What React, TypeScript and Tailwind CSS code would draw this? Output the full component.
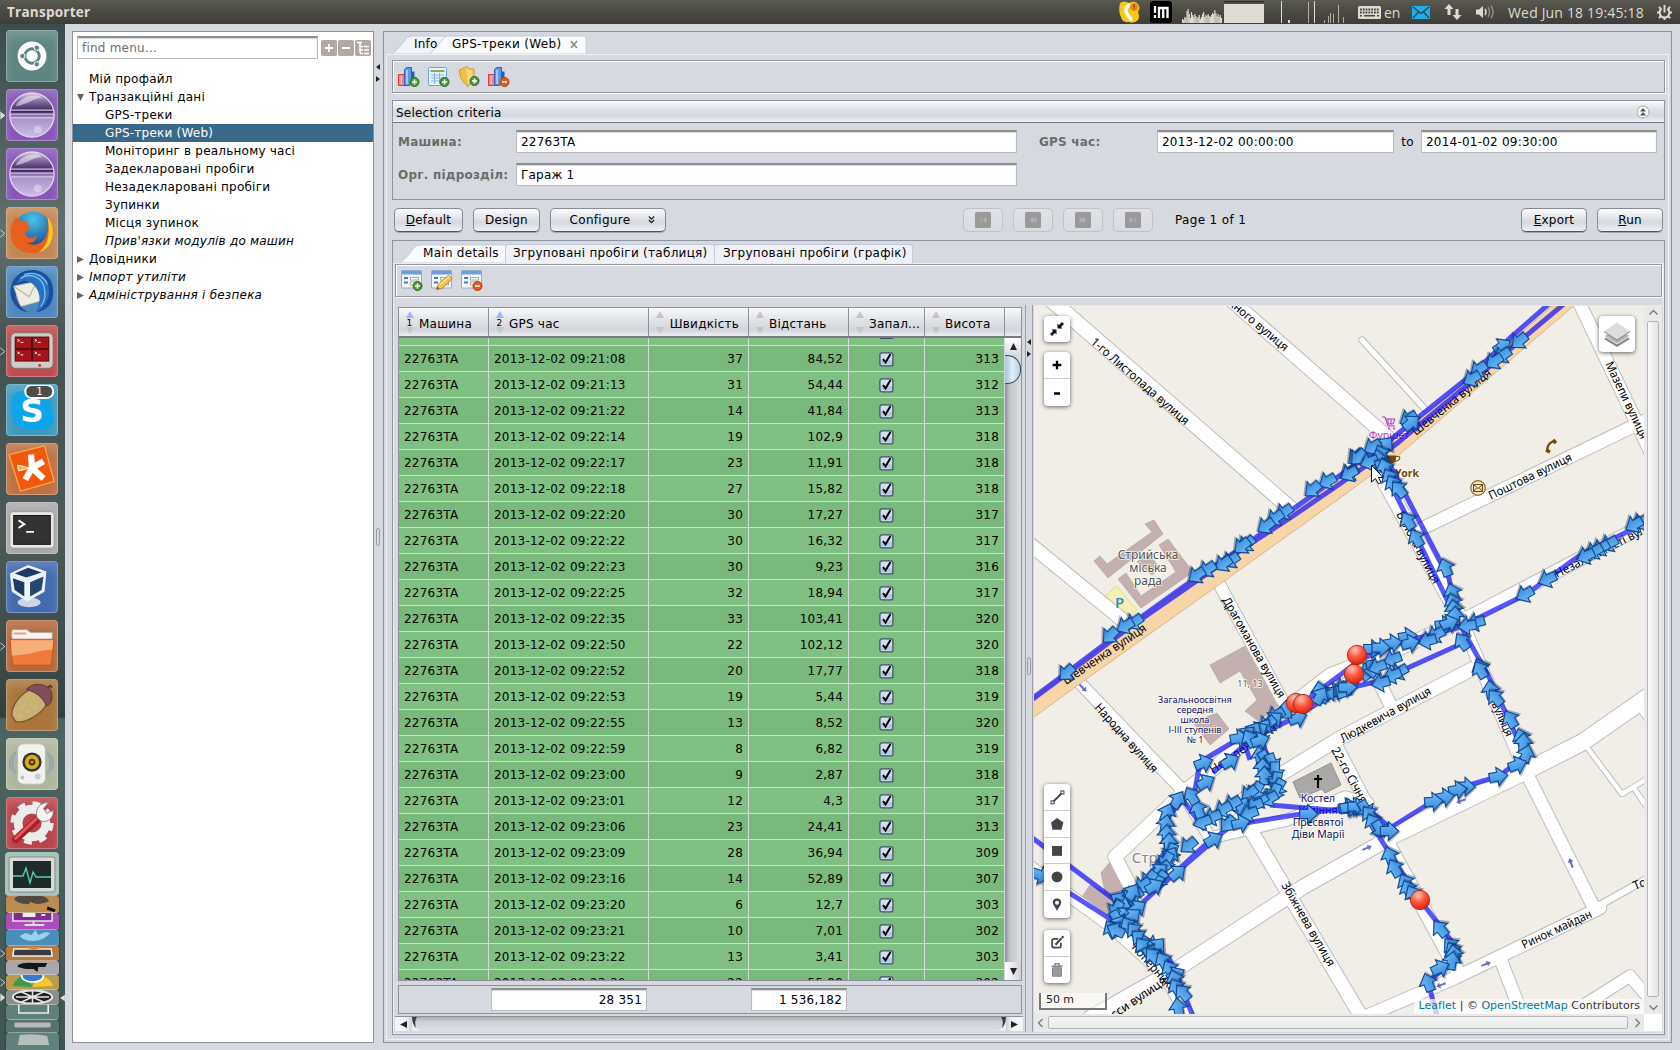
import React from "react";

/* ---------- launcher ---------- */

const tileTop =
  "relative h-[52px] w-[52px] shrink-0 overflow-hidden rounded-[4px] border border-white/30 shadow-[inset_0_6px_10px_rgba(255,255,255,0.18)]";

function Eclipse() {
  return (
    <svg viewBox="0 0 52 52" className="h-full w-full">
      <defs>
        <linearGradient id="ecl" x1="0" y1="0" x2="0" y2="1">
          <stop offset="0" stopColor="#d9cfe4" />
          <stop offset="0.18" stopColor="#8a6fa8" />
          <stop offset="0.42" stopColor="#3a2358" />
          <stop offset="0.55" stopColor="#a98fca" />
          <stop offset="1" stopColor="#cdbbe6" />
        </linearGradient>
      </defs>
      <circle cx="26" cy="26" r="23" fill="url(#ecl)" stroke="#e6dcf2" strokeWidth="1.3" />
      <path d="M4 21H48M3 25H49M4 29H48" stroke="#d5c6e8" strokeWidth="1.3" />
      <path d="M9 17C14 6 32 3 36 8C28 8 24 14 9 17Z" fill="#fff" opacity=".5" />
      <circle cx="32" cy="41" r="4" fill="#fff" opacity=".35" />
    </svg>
  );
}

const launcher: { bg: string; icon: React.ReactNode; mark?: string }[] = [
  {
    bg: "bg-[#5e8581]",
    icon: (
      <svg viewBox="0 0 52 52" className="h-full w-full">
        <circle cx="26" cy="26" r="15" fill="#fff" />
        <circle cx="26" cy="26" r="7.5" fill="none" stroke="#5e8581" strokeWidth="3" />
        <g fill="#5e8581" stroke="#fff" strokeWidth="1">
          <circle cx="16" cy="26" r="2.8" />
          <circle cx="31" cy="17.4" r="2.8" />
          <circle cx="31" cy="34.6" r="2.8" />
        </g>
      </svg>
    ),
  },
  { bg: "bg-[#8656b8]", icon: <Eclipse />, mark: "solid" },
  { bg: "bg-[#8656b8]", icon: <Eclipse /> },
  {
    bg: "bg-[#c28656]",
    mark: "open",
    icon: (
      <svg viewBox="0 0 52 52" className="h-full w-full">
        <defs>
          <radialGradient id="ffb" cx=".5" cy=".2" r=".8">
            <stop offset="0" stopColor="#4fc4ea" />
            <stop offset="1" stopColor="#123c86" />
          </radialGradient>
        </defs>
        <circle cx="27" cy="24" r="20" fill="url(#ffb)" />
        <path d="M42 9C52 20 49 42 33 46C16 50 2 40 4 22C5 16 8 14 8 10C12 11 14 13 15 14L22 14C20 17 21 18 24 20C22 24 19 22 19 27C21 32 27 32 31 29C30 36 24 37 20 36C28 41 38 37 41 28C43 22 44 16 42 9Z" fill="#e8601c" />
        <path d="M42 9C52 20 49 42 33 46C44 38 45 24 42 9Z" fill="#fbc926" />
      </svg>
    ),
  },
  {
    bg: "bg-[#4f86bd]",
    icon: (
      <svg viewBox="0 0 52 52" className="h-full w-full">
        <path d="M6 36C0 22 6 8 20 4C36 0 49 11 48 27C48 39 40 46 30 47C38 40 38 30 32 21C24 14 14 18 6 36Z" fill="#174f9c" />
        <path d="M7 20L31 15L36 35L14 41Z" fill="#efece2" stroke="#c8c4b6" />
        <path d="M7 20L23 31L31 15" fill="none" stroke="#b9b5a6" strokeWidth="1.2" />
        <path d="M10 18C13 5 31 1 40 12C48 24 43 41 30 47C36 36 35 25 27 18C21 13 15 13 10 18Z" fill="#2671c2" />
        <path d="M5 26C4 38 12 46 22 47C15 43 11 38 8 28Z" fill="#1b4f98" />
        <path d="M14 12C22 6 34 9 38 19C41 28 39 36 35 41M18 8C28 4 38 9 42 18" fill="none" stroke="#83bdf0" strokeWidth="1.4" />
      </svg>
    ),
  },
  {
    bg: "bg-[#bf4a50]",
    mark: "open",
    icon: (
      <svg viewBox="0 0 52 52" className="h-full w-full">
        <rect x="4" y="7" width="44" height="37" rx="5" fill="#cfcdc8" stroke="#77736c" />
        <rect x="8" y="11" width="36" height="26" fill="#4c0e10" />
        <g fill="#a8141b">
          <rect x="9" y="12" width="16" height="11" />
          <rect x="27" y="12" width="16" height="11" />
          <rect x="9" y="25" width="16" height="11" />
          <rect x="27" y="25" width="16" height="11" />
        </g>
        <path d="M11 14l2 1l-2 1M29 14l2 1l-2 1M11 27l2 1l-2 1M29 27l2 1l-2 1M14 17h3M32 17h3M14 30h3M32 30h3" stroke="#fff" fill="none" />
        <circle cx="34" cy="41" r="1.5" fill="#e22" />
      </svg>
    ),
  },
  {
    bg: "bg-[#3f9abf]",
    icon: (
      <svg viewBox="0 0 52 52" className="h-full w-full">
        <path d="M5 18C4 10 12 4 20 7C32 2 46 10 46 24C51 34 48 46 38 46C30 48 24 46 18 45C8 44 3 34 5 18Z" fill="#0ea5e8" />
        <text x="26" y="38" textAnchor="middle" fontSize="34" fontWeight="700" fill="#fff" className="tracking-normal font-['DejaVu_Sans']">S</text>
        <rect x="19" y="0" width="29" height="13.5" rx="6.5" fill="#4d4d4d" stroke="#fff" strokeWidth="2" />
        <text x="34" y="10.5" textAnchor="middle" fontSize="10" fill="#fff" className="font-['DejaVu_Sans']">1</text>
      </svg>
    ),
  },
  {
    bg: "bg-[#bd7143]",
    icon: (
      <svg viewBox="0 0 52 52" className="h-full w-full">
        <path d="M2 11L39 2L49 39L14 49Z" fill="#f3570c" stroke="#f7a44d" strokeWidth="1.5" />
        <path d="M26 25L25 11M26 25L38 18M26 25L38 36M26 25L19 37" stroke="#fff" strokeWidth="6.5" />
        <path d="M11 22L24 25L12 28Z" fill="#fbb23d" stroke="#fff" />
      </svg>
    ),
  },
  {
    bg: "bg-[#a8a8a8]",
    icon: (
      <svg viewBox="0 0 52 52" className="h-full w-full">
        <rect x="3" y="9" width="46" height="38" rx="3" fill="#e8e8e6" stroke="#999" />
        <rect x="7" y="13" width="38" height="30" fill="#333" stroke="#111" />
        <path d="M12 18l6 4l-6 4" stroke="#fff" strokeWidth="2" fill="none" />
        <path d="M20 30h8" stroke="#fff" strokeWidth="2" />
      </svg>
    ),
  },
  {
    bg: "bg-[#426ab0]",
    icon: (
      <svg viewBox="0 0 52 52" className="h-full w-full">
        <ellipse cx="23" cy="42" rx="12" ry="5" fill="#ccd6e4" />
        <path d="M3 12L22 3L41 10L39 31L21 41L5 31Z" fill="#eef3f9" />
        <path d="M8 12L22 6L36 11L20 16Z" fill="#1c3a62" />
        <path d="M6 17L18 21L18 36L8 29Z" fill="#1c3a62" />
        <path d="M24 21L38 15L36 29L24 36Z" fill="#24476f" />
      </svg>
    ),
  },
  {
    bg: "bg-[#b4683f]",
    mark: "open",
    icon: (
      <svg viewBox="0 0 52 52" className="h-full w-full">
        <path d="M5 11Q5 9 7 9H21Q23 12 26 12H47V30H5Z" fill="#f6f3ef" stroke="#aaa" />
        <path d="M7 13H20" stroke="#f0a171" strokeWidth="2" />
        <path d="M3 19H49L46 46H6Z" fill="#ee7b3c" stroke="#c95418" />
        <path d="M4 20H48L47 30C32 30 24 36 5 36Z" fill="#f7ae78" />
      </svg>
    ),
  },
  {
    bg: "bg-[#a9753a]",
    icon: (
      <svg viewBox="0 0 52 52" className="h-full w-full">
        <path d="M5 37C5 22 20 10 28 9L42 24C36 36 18 46 9 43Z" fill="#c9b078" stroke="#7a5a35" strokeWidth="1.4" />
        <path d="M12 32l3-5M20 34l5-3M19 21l4-4M27 29l4-2M12 38l4-2M16 26l2 3M26 20l3 3M24 26l2-2" stroke="#d2ba68" strokeWidth="2" />
        <path d="M20 10C26 2 42 3 46 12C48 20 46 25 41 27C38 19 30 12 20 10Z" fill="#80505a" stroke="#553238" />
        <path d="M42 8L45 6L47 8" stroke="#553238" fill="none" strokeWidth="2" />
      </svg>
    ),
  },
  {
    bg: "bg-[#aeb79d]",
    icon: (
      <svg viewBox="0 0 52 52" className="h-full w-full">
        <path d="M9 14Q2 25 9 36M5 17Q1 25 5 33M42 14Q49 25 42 36M46 17Q50 25 46 33" stroke="#8fa2b0" fill="none" strokeWidth="1.6" />
        <rect x="11" y="5" width="29" height="42" rx="6" fill="#f1f1ef" stroke="#b9b9b5" />
        <circle cx="26" cy="24" r="10" fill="#333" />
        <circle cx="26" cy="24" r="7.500" fill="#d8ab1c" />
        <circle cx="26" cy="24" r="3.5" fill="#4a3a0c" />
        <circle cx="26" cy="24" r="1.500" fill="#d8ab1c" />
        <circle cx="16" cy="40" r="2" fill="#bbb" />
        <circle cx="32" cy="39" r="3" fill="#ccc" />
      </svg>
    ),
  },
  {
    bg: "bg-[#b8444b]",
    icon: (
      <svg viewBox="0 0 52 52" className="h-full w-full">
        <circle cx="26" cy="26" r="14.500" fill="none" stroke="#ececea" strokeWidth="9" />
        <circle cx="26" cy="26" r="20" fill="none" stroke="#ececea" strokeWidth="5" strokeDasharray="8 7.7" />
        <path d="M9 43L34 20" stroke="#a91e26" strokeWidth="7.5" strokeLinecap="round" />
        <path d="M9 42L30 22" stroke="#e7545a" strokeWidth="3" strokeLinecap="round" />
        <path d="M31 20C29 11 35 4 43 5L38 11L41 16L48 13C49 21 42 26 35 24Z" fill="#f6f6f4" stroke="#888" />
      </svg>
    ),
  },
];

const stack: { bg: string; h: string; art: React.ReactNode; mark?: string }[] = [
  { bg: "bg-[#b98c52]", h: "h-[17px]", art: <g><path d="M8 3Q14 -3 26 0Q40 -2 44 5Q36 9 22 8Q12 8 8 3Z" fill="#4f4a42" /><path d="M24 7L48 14" stroke="#d6892f" strokeWidth="2" /><path d="M42 12L50 15" stroke="#111" strokeWidth="3" /></g> },
  { bg: "bg-[#ad4cbb]", h: "h-[17px]", art: <g><path d="M7 0V8H47V0" fill="#7e2e8c" stroke="#e9e0ec" strokeWidth="1.600" /><path d="M19 12H39M28 8V12" stroke="#ddd" strokeWidth="2" /><path d="M17 0V4H30V0M36 1V3H40V1" fill="#eee" /></g> },
  { bg: "bg-[#4a8fba]", h: "h-[16px]", art: <path d="M14 6C18 12 36 14 45 3L40 2L33 5L30 0L26 5L20 3Z" fill="#9bd0ee" /> },
  { bg: "bg-[#b57a42]", h: "h-[15px]", mark: "open", art: <g><path d="M8 3H46L47 10H7Z" fill="#3a3a3a" stroke="#eee" strokeWidth="1.600" /><path d="M20 1Q28 7 36 1Z" fill="#d88b3a" /></g> },
  { bg: "bg-[#a9a6ac]", h: "h-[14px]", art: <path d="M12 4Q18 1 28 2L42 2L40 6L33 6L32 11L28 8L20 8L12 6Z" fill="#161616" /> },
  { bg: "bg-[#b99a52]", h: "h-[15px]", mark: "open", art: <g><path d="M7 11A21 14 0 0 1 20 0L27 12Z" fill="#3c9a4b" /><path d="M34 0A21 14 0 0 1 48 11L27 12Z" fill="#f2c928" /><ellipse cx="27" cy="1" rx="11" ry="6" fill="#3c78c8" stroke="#fff" strokeWidth="1.600" /></g> },
  { bg: "bg-[#8a8f8a]", h: "h-[15px]", mark: "solid", art: <g><ellipse cx="27" cy="7" rx="20" ry="6.500" fill="#222" stroke="#e6e6e6" strokeWidth="2" /><path d="M10 7H44M27 1V13M16 2L38 12M38 2L16 12" stroke="#e6e6e6" strokeWidth="1.600" /></g> },
  { bg: "bg-[#5f807c]", h: "h-[15px]", art: <path d="M13 0V8H43V0" fill="none" stroke="#e8f0ee" strokeWidth="1.600" /> },
  { bg: "bg-[#55726f]", h: "h-[13px]", art: <rect x="8" y="2" width="38" height="6" rx="2" fill="#b5bbb9" stroke="#666" /> },
  { bg: "bg-[#5f807c]", h: "h-[18px]", art: <path d="M14 2Q28 0 42 3L44 12H12Z" fill="#b5c0bc" /> },
];

function RunMark({ kind }: { kind?: string }) {
  return (
    <svg viewBox="0 0 6 10" className="h-[9px] w-[6px] shrink-0">
      {kind && <path d="M0 1L5 5L0 9" fill={kind === "solid" ? "#dcdcdc" : "none"} stroke="#dcdcdc" />}
    </svg>
  );
}

function Launcher() {
  return (
    <aside className="flex h-full w-[65px] shrink-0 flex-col overflow-hidden bg-[linear-gradient(#3c4c4c,#5f706e_20%,#445251_32%,#4b5a58_50%,#3b4947_63%,#31403e_67.5%,#4d6562_67.8%,#3f5552)] pt-[6px]">
      <div className="flex flex-col gap-[7px]">
        {launcher.map((t, i) => (
          <div key={i} className="flex items-center">
            <RunMark kind={t.mark} />
            <div className={`${tileTop} ${t.bg}`}>{t.icon}</div>
          </div>
        ))}
      </div>
      <div className="mt-[3px] flex items-center pl-[5px]">
        <div className="h-[44px] w-[54px] rounded-[4px] bg-[#a9c4bb]">
          <svg viewBox="0 0 54 44" className="h-full w-full">
            <rect x="4" y="5" width="46" height="35" rx="2" fill="#d5dbd8" stroke="#888" />
            <rect x="8" y="9" width="38" height="27" fill="#1f2b2b" />
            <path d="M8 24H18L21 16L25 31L28 20L31 25H46" stroke="#4fd1ac" strokeWidth="1.4" fill="none" />
          </svg>
        </div>
      </div>
      <div className="flex flex-col">
        {stack.map((s, i) => (
          <div key={i} className={`flex items-center ${s.h}`}>
            <RunMark kind={s.mark} />
            <div className={`h-full w-[53px] overflow-hidden rounded-[3px] border-b border-white/40 shadow-[0_1px_2px_rgba(0,0,0,0.6)] ${s.bg}`}>
              <svg viewBox="0 0 54 18" className="h-[18px] w-full" preserveAspectRatio="none">{s.art}</svg>
            </div>
            {s.mark === "solid" && (
              <svg viewBox="0 0 6 10" className="ml-px h-[8px] w-[5px]"><path d="M6 1L0 5L6 9Z" fill="#ddd" /></svg>
            )}
          </div>
        ))}
      </div>
    </aside>
  );
}

/* ---------- top panel ---------- */

const cpu = [4, 3, 6, 5, 12, 14, 9, 5, 11, 8, 6, 9, 7, 5, 6, 8, 4, 6, 9, 11, 6, 8, 7, 9, 7, 6, 8, 10, 9, 13, 10, 7, 9, 6, 8, 5];

function TopBar() {
  return (
    <header className="flex h-6 shrink-0 items-center bg-[linear-gradient(#5b5a50,#4d4c45_40%,#3e3d39)] pl-[7px] pr-[7px] text-[#dfdbd2] font-['Open_Sans',sans-serif]">
      <span className="text-[13.500px] font-bold tracking-[0.250px]">Transporter</span>
      <svg viewBox="0 0 22 24" className="ml-auto h-6 w-[22px]">
        <path d="M2 3Q6 0 11 3Q17 0 20 4Q23 8 20 12Q22 17 20 20Q16 24 11 22Q4 23 3 17Q0 12 2 3Z" fill="#f6c915" />
        <path d="M11 5Q4 10 13 19" stroke="#fff" strokeWidth="3.5" fill="none" strokeLinecap="round" />
        <circle cx="16" cy="7" r="4" fill="#f08a1a" />
        <path d="M16 4.500V7.500M16 8.500V9.500" stroke="#7b3c00" strokeWidth="1.400" />
      </svg>
      <div className="ml-[10px] flex h-[22px] w-[22px] items-center justify-center rounded-[3px] bg-black">
        <svg viewBox="0 0 22 22" className="h-[22px] w-[22px]">
          <path d="M5 5V12M5 14V17M9 17V7H17.500V17M13.200 7V17" stroke="#fff" strokeWidth="2.300" fill="none" />
        </svg>
      </div>
      <svg viewBox="0 0 165 24" className="ml-[10px] h-6 w-[165px]">
        {cpu.map((h, i) => (
          <rect key={i} x={i * 1.11} y={23 - h} width="1.2" height={h} fill="#dfdbd2" />
        ))}
        <rect x="42" y="1" width="40" height="1.500" fill="#2f2e2a" />
        <rect x="42" y="4" width="40" height="19" fill="#dfdbd2" />
        <g fill="#dfdbd2">
          <rect x="99" y="1" width="1" height="22" />
          <rect x="106" y="20" width="2" height="3" />
          <rect x="126" y="2" width="1" height="21" opacity=".7" />
          <rect x="132" y="1" width="1" height="22" />
          <g opacity=".7">
            <rect x="142" y="20" width="1" height="3" />
            <rect x="146" y="16" width="1" height="7" />
            <rect x="148" y="13" width="1" height="10" />
            <rect x="151" y="14" width="1" height="9" />
            <rect x="156" y="5" width="1" height="18" />
            <rect x="161" y="17" width="1" height="6" />
          </g>
        </g>
      </svg>
      <svg viewBox="0 0 23 13" className="ml-[11px] h-[13px] w-[23px]">
        <rect width="23" height="13" rx="1.500" fill="#dfdbd2" />
        <path d="M2 3.500H21M2 6.500H21" stroke="#45443f" strokeWidth="1.800" strokeDasharray="1.800 1" />
        <path d="M2 9.800H4M6 9.800H17M19 9.800H21" stroke="#45443f" strokeWidth="1.600" />
      </svg>
      <span className="ml-[3px] w-[16px] text-[14px] tracking-normal">en</span>
      <svg viewBox="0 0 18 13" className="ml-[12px] h-[13px] w-[18px]">
        <rect width="18" height="13" fill="#23aeea" />
        <path d="M1 1L9 7.500L17 1M1 12L6.500 6M17 12L11.500 6" stroke="#244" strokeWidth="1.200" fill="none" />
      </svg>
      <svg viewBox="0 0 18 18" className="ml-[14px] h-[18px] w-[18px]">
        <path d="M5 1L9.500 6H6.500V12H3.500V6H0.500ZM13 17L8.500 12H11.500V6H14.500V12H17.500Z" fill="#dfdbd2" />
      </svg>
      <svg viewBox="0 0 19 16" className="ml-[14px] h-4 w-[19px]">
        <path d="M0 5.500H3L7 2V14L3 10.500H0Z" fill="#dfdbd2" />
        <path d="M9 5Q11 8 9 11" stroke="#dfdbd2" strokeWidth="1.500" fill="none" />
        <path d="M12 3Q15 8 12 13M15 1.500Q19 8 15 14.500" stroke="#8d8b84" strokeWidth="1.500" fill="none" />
      </svg>
      <span className="ml-[13px] w-[136px] whitespace-nowrap text-[14px] tracking-[0.170px]">Wed Jun 18 19:45:18</span>
      <svg viewBox="0 0 18 18" className="ml-[12px] h-[17px] w-[17px]">
        <path d="M6 5A5.200 5.200 0 1 0 12 5" stroke="#dfdbd2" strokeWidth="2.200" fill="none" />
        <path d="M9 1V9M1 9H4M14 9H17M3 3L5 5M15 3L13 5M3 15L5 13M15 15L13 13M9 14V17" stroke="#dfdbd2" strokeWidth="2" />
      </svg>
    </header>
  );
}

/* ---------- navigation tree ---------- */

type Row = { t: string; l: number; a?: "open" | "closed"; i?: boolean; s?: boolean };
const tree: Row[] = [
  { t: "Мій профайл", l: 0 },
  { t: "Транзакційні дані", l: 0, a: "open" },
  { t: "GPS-треки", l: 1 },
  { t: "GPS-треки (Web)", l: 1, s: true },
  { t: "Моніторинг в реальному часі", l: 1 },
  { t: "Задекларовані пробіги", l: 1 },
  { t: "Незадекларовані пробіги", l: 1 },
  { t: "Зупинки", l: 1 },
  { t: "Місця зупинок", l: 1 },
  { t: "Прив'язки модулів до машин", l: 1, i: true },
  { t: "Довідники", l: 0, a: "closed" },
  { t: "Імпорт утиліти", l: 0, a: "closed", i: true },
  { t: "Адміністрування і безпека", l: 0, a: "closed", i: true },
];

const field =
  "flex h-[23px] items-center border border-t-2 border-[#b8babd] border-t-[#8c8e92] bg-white px-[4px] shadow-[inset_0_1px_1px_#d8d8da]";

function Nav() {
  return (
    <nav className="ml-[7px] flex h-[1012px] w-[302px] shrink-0 flex-col border border-[#8d9095] bg-white">
      <div className="flex items-center gap-px pl-[4px] pt-[4px]">
        <div className={`${field} w-[241px] text-[#6e6e6e]`}>find menu...</div>
        <div className="ml-[2px] flex gap-px">
          {["M8 4V12M4 8H12", "M4 8H12"].map((d) => (
            <svg key={d} viewBox="0 0 16 16" className="h-4 w-4 rounded-[2px] bg-[#afa8a3]">
              <path d={d} stroke="#fff" strokeWidth="2" />
            </svg>
          ))}
          <svg viewBox="0 0 16 16" className="h-4 w-4 rounded-[2px] bg-[#afa8a3]">
            <path d="M2 2.500H7M5 3V13M5 6.500H8M5 10H8M5 13.500H8M9 6.500H14M9 10H14M9 13.500H14" stroke="#fff" strokeWidth="1.500" />
          </svg>
        </div>
      </div>
      <ul className="mt-[10px] pt-px">
        {tree.map((r) => (
          <li
            key={r.t}
            className={`flex h-[18px] items-center whitespace-nowrap ${r.s ? "bg-[#39698a] text-white" : "text-black"} ${r.l ? "pl-[32px]" : "pl-[4px]"} ${r.i ? "italic" : ""}`}
          >
            {!r.l && (
              <svg viewBox="0 0 8 8" className="mr-[5px] h-[7px] w-[7px] shrink-0">
                {r.a === "open" && <path d="M0 0H8L4 8Z" fill="#646464" />}
                {r.a === "closed" && <path d="M0 0V8L8 4Z" fill="#646464" />}
              </svg>
            )}
            <span>{r.t}</span>
          </li>
        ))}
      </ul>
    </nav>
  );
}

/* ---------- toolbar icons ---------- */

function Badge({ minus, y = 15 }: { minus?: boolean; y?: number }) {
  return (
    <g>
      <circle cx="16.500" cy={y} r="4.500" fill={minus ? "#e8591a" : "#4a9a33"} stroke={minus ? "#b63c0c" : "#2c6b1e"} />
      <path d={minus ? `M14 ${y}h5` : `M14 ${y}h5M16.500 ${y - 2.5}v5`} stroke="#fff" strokeWidth="1.600" />
    </g>
  );
}

const chart = (
  <g>
    <rect x="0.500" y="8.500" width="6" height="11" fill="#ff7d84" stroke="#e23a45" />
    <rect x="2.500" y="10" width="1.500" height="8" fill="#ffc9cc" />
    <path d="M6.500 3.500L8.500 1.500H13.500V18L12 19.500H6.500Z" fill="#5b97ea" stroke="#2c5fb8" />
    <rect x="8" y="4" width="2" height="14" fill="#a7c9f7" />
    <rect x="13.500" y="5.500" width="3" height="13" fill="#2d5da8" />
  </g>
);
const grid = (
  <g>
    <rect x="0.500" y="1.500" width="18" height="18" rx="1" fill="#e9f3fc" stroke="#6fa3d8" />
    <rect x="2.500" y="4" width="14" height="2" fill="#7fb24f" />
    <path d="M3 9H16M3 12H16M3 15H16M6.500 7V18M11.500 7V18" stroke="#7fb2e6" />
  </g>
);
const shield = (
  <g>
    <path d="M1 4Q5 3 8 0.500Q12 4 16 3V10Q15 17 10 20.500Q2 15 1 4Z" fill="#f2bf49" stroke="#d69a28" />
    <path d="M8 2Q11 4.500 14.500 4.500V10Q14 15 10 18Z" fill="#f9d884" />
  </g>
);
const form = (
  <g>
    <rect x="0.500" y="0.500" width="20" height="17.500" rx=".5" fill="#f4f8fc" stroke="#8fabd0" />
    <rect x="1" y="1" width="19" height="3.500" fill="#6f9edb" />
    <path d="M3 8H7M3 12.500H7" stroke="#4a78b8" strokeWidth="1.800" />
    <rect x="9.500" y="7.500" width="8" height="2.500" fill="#fff" stroke="#a5a9b0" />
    <rect x="9.500" y="12" width="8" height="3" fill="#fff" stroke="#a5a9b0" />
  </g>
);
const pencil = (
  <g>
    <path d="M5.500 19.500L7.500 14L17.500 5.500L21.300 8.500L11 18.500Z" fill="#f6c451" stroke="#b9812a" />
    <path d="M8 15L18.500 6.500" stroke="#fde6a6" strokeWidth="1.500" />
    <path d="M5.500 19.500L6.500 16.500L8.500 18.800Z" fill="#7a5a2a" />
  </g>
);

function Icons({ items, gap }: { items: React.ReactNode[]; gap: string }) {
  return (
    <div className={`flex ${gap}`}>
      {items.map((n, i) => (
        <svg key={i} viewBox="0 0 22 22" className="h-[22px] w-[22px]">{n}</svg>
      ))}
    </div>
  );
}

const etched = "flex items-center border border-[#9497a0] shadow-[1px_1px_0_#fff,inset_1px_1px_0_#fff]";

function Button({ children, w, chevron }: { children: React.ReactNode; w: string; chevron?: boolean }) {
  return (
    <button
      className={`${w} flex h-[24px] items-center justify-center rounded-[5px] border border-[#878a92] border-b-[#4e5157] bg-[linear-gradient(#fbfbfc,#e6e8ec_35%,#d5d8df_60%,#eef0f4)] shadow-[0_1px_0_#a5a8b0]`}
    >
      {children}
      {chevron && (
        <svg viewBox="0 0 8 8" className="ml-[18px] h-[8px] w-[7px]">
          <path d="M1 0L4 3L7 0M1 4L4 7L7 4" stroke="#222" strokeWidth="1.500" fill="none" />
        </svg>
      )}
    </button>
  );
}

function SplitHandle({ w, pad, grip }: { w: string; pad: string; grip: string }) {
  return (
    <div className={`${w} ${pad} flex shrink-0 flex-col items-center`}>
      <svg viewBox="0 0 6 18" className="h-[18px] w-[6px]">
        <path d="M5 0V6L1 3ZM1 12V18L5 15Z" fill="#222" />
      </svg>
      <div className={`${grip} h-[18px] w-[4px] rounded-[2px] border border-[#9a9ea8]`} />
    </div>
  );
}

/* ---------- data table ---------- */

const rows: [string, string, string, string][] = [
  ["09:21:08", "37", "84,52", "313"],
  ["09:21:13", "31", "54,44", "312"],
  ["09:21:22", "14", "41,84", "313"],
  ["09:22:14", "19", "102,9", "318"],
  ["09:22:17", "23", "11,91", "318"],
  ["09:22:18", "27", "15,82", "318"],
  ["09:22:20", "30", "17,27", "317"],
  ["09:22:22", "30", "16,32", "317"],
  ["09:22:23", "30", "9,23", "316"],
  ["09:22:25", "32", "18,94", "317"],
  ["09:22:35", "33", "103,41", "320"],
  ["09:22:50", "22", "102,12", "320"],
  ["09:22:52", "20", "17,77", "318"],
  ["09:22:53", "19", "5,44", "319"],
  ["09:22:55", "13", "8,52", "320"],
  ["09:22:59", "8", "6,82", "319"],
  ["09:23:00", "9", "2,87", "318"],
  ["09:23:01", "12", "4,3", "317"],
  ["09:23:06", "23", "24,41", "313"],
  ["09:23:09", "28", "36,94", "309"],
  ["09:23:16", "14", "52,89", "307"],
  ["09:23:20", "6", "12,7", "303"],
  ["09:23:21", "10", "7,01", "302"],
  ["09:23:22", "13", "3,41", "303"],
  ["09:23:30", "22", "55,88", "302"],
];
const cols = "grid grid-cols-[90px_160px_100px_100px_76px_80px]";

function Check() {
  return (
    <svg viewBox="0 0 15 15" className="h-[15px] w-[15px]">
      <rect x="0.900" y="0.900" width="13" height="13" rx="2" fill="#d3deeb" stroke="#43536b" strokeWidth="1.300" />
      <path d="M2 8H13V12.500H2Z" fill="#b3c8de" />
      <path d="M4 7L6.500 10.500L11.500 2" stroke="#000" strokeWidth="2" fill="none" />
    </svg>
  );
}

function Head({ t, n, right }: { t: string; n?: string; right?: boolean }) {
  return (
    <div className="flex items-center border-r border-[#8f929b] pl-[6px]">
      <span className="flex w-[9px] flex-col items-center text-[9px] leading-[10px]">
        <svg viewBox="0 0 8 7" className="h-[7px] w-[8px]"><path d="M4 0L8 7H0Z" fill={n ? "#9fb4ff" : "#c6c6c6"} /></svg>
        <span className="h-[9px]">{n}</span>
        <svg viewBox="0 0 8 7" className="h-[7px] w-[8px]"><path d="M4 7L8 0H0Z" fill="#c6c6c6" /></svg>
      </span>
      <span className={`pt-[3px] ${right ? "ml-auto mr-[9px]" : "ml-[5px]"}`}>{t}</span>
    </div>
  );
}

function DataTable() {
  return (
    <div className="flex h-[727px] w-[628px] shrink-0 flex-col pl-[3px]">
      <div className="mt-[2px] flex h-[674px] w-[624px] flex-col border border-[#8d909b]">
        <div className="flex h-[30px] shrink-0 border-b-2 border-[#777b84] bg-[linear-gradient(#fafafb,#e0e2e6_45%,#d3d5dc_80%,#eceef3)]">
          <div className={`${cols} w-[606px] shrink-0`}>
            <Head t="Машина" n="1" />
            <Head t="GPS час" n="2" />
            <Head t="Швидкість" right />
            <Head t="Відстань" />
            <Head t="Запал..." />
            <Head t="Висота" />
          </div>
        </div>
        <div className="flex min-h-0 flex-1">
          <div className="w-[606px] shrink-0 overflow-hidden bg-[#80c083]">
            <div className={`${cols} h-[8px] border-b border-[#d6d9e0]`}>
              {[0, 1, 2, 3, 4, 5].map((i) => (
                <span key={i} className="flex justify-center border-r border-[#d6d9e0]">
                  {i === 4 && <i className="h-px w-[13px] bg-[#43536b]" />}
                </span>
              ))}
            </div>
            {rows.map((r, i) => (
              <div
                key={r[0]}
                className={`${cols} h-[26px] border-b border-[#d6d9e0] leading-[26px] [&>span]:border-r [&>span]:border-[#d6d9e0] [&>span]:px-[5px] ${i % 2 ? "bg-[#80c083]" : "bg-[#79b97b]"}`}
              >
                <span>22763TA</span>
                <span>2013-12-02 {r[0]}</span>
                <span className="text-right">{r[1]}</span>
                <span className="text-right">{r[2]}</span>
                <span className="flex items-center justify-center"><Check /></span>
                <span className="text-right">{r[3]}</span>
              </div>
            ))}
          </div>
          <div className="flex flex-1 flex-col items-center bg-[linear-gradient(90deg,#8e9096,#c4c6cc_30%,#dcdee3)]">
            <div className="flex h-[17px] w-full items-center justify-center bg-[linear-gradient(#fff,#d8dae0)]">
              <svg viewBox="0 0 8 8" className="h-[7px] w-[7px]"><path d="M4 0L8 8H0Z" fill="#222" /></svg>
            </div>
            <div className="h-[29px] w-full rounded-r-[14px] border border-l-0 border-[#3e4a5a] bg-[linear-gradient(90deg,#a9c4da,#dfeefa_50%,#b7d0e4)]" />
            <div className="mt-auto flex h-[18px] w-full items-center justify-center bg-[linear-gradient(90deg,#fff,#d0d2d8)]">
              <svg viewBox="0 0 8 8" className="h-[7px] w-[7px]"><path d="M4 8L8 0H0Z" fill="#222" /></svg>
            </div>
          </div>
        </div>
      </div>
      <div className="mt-[4px] flex h-[29px] w-[624px] items-center border border-[#8d909b] pl-[92px]">
        <div className={`${field} w-[156px] justify-end`}>28 351</div>
        <div className={`${field} ml-[104px] w-[96px] justify-end`}>1 536,182</div>
      </div>
      <div className="ml-[-3px] mt-[2px] flex h-[15px] w-[628px] items-center border-t border-[#8d909b] bg-[linear-gradient(#a9abb1,#cfd1d6_35%,#dcdee3)]">
        <div className="flex h-full w-[17px] items-center justify-center bg-[linear-gradient(90deg,#f4f5f7_60%,#cfd1d6)]">
          <svg viewBox="0 0 8 8" className="h-[7px] w-[7px]"><path d="M8 0V8L0 4Z" fill="#222" /></svg>
        </div>
        <svg viewBox="0 0 8 14" className="h-[14px] w-[8px]"><path d="M0 0Q1 9 8 14H0Z" fill="#eceef1" /><path d="M0 0H5Q2 4 4 11Q0 7 0 0Z" fill="#3c3e42" /></svg>
        <svg viewBox="0 0 8 14" className="ml-auto h-[14px] w-[8px]"><path d="M8 0Q7 9 0 14H8Z" fill="#eceef1" /><path d="M8 0H3Q6 4 4 11Q8 7 8 0Z" fill="#3c3e42" /></svg>
        <div className="flex h-full w-[17px] items-center justify-center bg-[linear-gradient(270deg,#f4f5f7_60%,#cfd1d6)]">
          <svg viewBox="0 0 8 8" className="h-[7px] w-[7px]"><path d="M0 0V8L8 4Z" fill="#222" /></svg>
        </div>
      </div>
    </div>
  );
}

/* ---------- map ---------- */

const roads: [number, string][] = [
  [15, "M1050 299L1290 508"],
  [14, "M1230 299L1392 441"],
  [14, "M1026 541L1130 626"],
  [6, "M1362 340L1424 408"],
  [13, "M1578 300L1652 455"],
  [13, "M1423 528L1644 421"],
  [15, "M1378 470L1458 614"],
  [12, "M1216 578L1282 700"],
  [14, "M1652 521L1470 617L1400 648L1330 675L1263 727L1220 763L1183 793L1115 857L1135 895"],
  [14, "M1472 669L1340 738L1283 773L1225 812"],
  [12, "M1210 838L1287 820L1345 797L1368 803"],
  [13, "M1463 625L1525 770L1595 910"],
  [17, "M1383 840L1522 773L1583 742L1652 694"],
  [15, "M1390 838L1303 887L1180 967L1090 1018"],
  [12, "M1076 679L1190 798"],
  [12, "M1183 793L1210 838"],
  [12, "M1335 742L1388 845"],
  [14, "M1385 838L1458 972"],
  [14, "M1246 822L1362 1018"],
  [13, "M1600 908L1507 953L1457 977L1362 1018"],
  [7, "M1600 905L1650 877"],
  [13, "M1500 958L1524 1020"],
  [12, "M1570 1014L1630 976L1652 1002"],
  [5, "M1586 746L1622 794L1650 777M1634 788L1650 812M1638 706L1650 724"],
  [13, "M1376 676L1392 708"],
  [13, "M1026 864L1110 925L1165 975L1190 1020"],
];

const buildings = [
  "1094,561 1100,556 1107,564 1152,532 1145,524 1154,520 1163,534 1108,578",
  "1118,579 1126,573 1141,596 1176,572 1159,545 1168,539 1193,572 1141,608",
  "1137,562 1148,553 1160,568 1152,575",
  "1210,665 1247,645 1262,663 1282,712 1262,724 1245,711 1257,700 1240,671 1220,683",
  "1193,722 1217,713 1229,729 1210,745",
  "1101,873 1110,862 1128,893 1110,917 1082,897 1090,885 1105,892",
];

const tracks = [
  "M1030 700L1073 668L1130 625L1190 582L1250 542L1293 509L1360 461L1390 440L1470 376L1510 338L1550 303",
  "M1030 701L1130 627L1250 544L1293 516L1360 470L1395 445L1470 383L1565 303",
  "M1380 462L1453 612M1390 465L1449 578L1455 612",
  "M1650 521L1583 553L1525 595L1460 627L1400 643L1360 660L1300 705L1250 732L1200 762L1195 790",
  "M1463 643L1403 670L1375 682L1340 690L1290 720L1250 740L1213 773",
  "M1460 625L1488 675L1525 755L1500 776L1466 786L1430 803L1390 828L1365 806L1307 813L1233 825L1205 845L1140 905L1120 930",
  "M1244 742L1250 760M1262 740L1270 765M1270 805L1355 812M1220 835L1150 895",
  "M1030 836L1120 904M1030 868L1115 922L1170 960L1193 1016",
  "M1376 832L1420 900L1453 943L1450 963L1428 982L1437 1016",
  "M1205 830L1183 800L1165 820L1166 850L1150 875L1120 905",
];

type Group = { x: number; y: number; pts: number[][] };
const arrowGroups: Group[] = [
  { x: 1020, y: 295, pts: [
    [1010,485,140],[992,532,145],[925,558,150],[880,582,140],[795,650,145],[768,668,145],[740,692,145],[682,745,140],[668,752,140],[635,795,145],[612,805,145],[565,822,145],[532,840,145],[345,980,145],[318,992,150],[272,1020,135],[142,1132,135],
  ] },
  { x: 1340, y: 295, pts: [
    [540,137,140],[485,155,-35],[490,180,145],[465,198,145],[418,222,145],[398,250,150],[208,370,150],[212,385,-40],[135,452,-50],[100,455,150],[57,485,135],[30,535,150],[125,480,-115],[115,495,-100],[90,500,160],[130,515,-150],[135,520,-110],[150,550,-120],[160,570,-120],[178,585,-130],[205,680,-120],[230,732,-120],[317,820,-110],[338,895,-110],[340,925,-110],[342,945,-100],[345,965,-90],[310,990,-5],[325,985,-20],[410,982,165],[385,992,170],[905,680,150],[885,688,150],[810,745,150],[785,758,150],[765,768,150],[740,782,155],[625,852,155],[557,897,150],[290,1018,150],[265,1037,165],[200,1025,-10],[208,1045,-15],[155,1045,-10],[95,1062,0],[120,1058,0],[160,1092,160],[368,1042,-125],[422,1120,-115],
  ] },
  { x: 1020, y: 660, pts: [
    [985,75,-20],[970,82,160],[945,95,-20],[920,105,-50],[900,95,-100],[900,110,-60],[830,175,-20],[800,150,-90],[770,165,150],[760,180,-40],[745,190,140],[730,205,-60],[715,210,-30],[700,215,-60],[680,225,-50],[655,235,-10],[690,238,-120],[718,242,-20],
    [720,290,-100],[735,295,60],[755,305,70],[728,325,-90],[765,330,90],[733,350,-90],[770,360,100],[775,380,120],[765,395,110],[750,415,150],[720,420,150],[710,390,120],[690,400,140],[705,435,160],[665,440,-60],[640,430,150],[690,460,160],[625,490,130],[660,490,-15],[612,447,150],[580,470,160],[550,485,160],[535,450,-110],[515,410,-120],[555,368,-30],[548,310,-20],[628,305,-30],
    [472,422,-60],[440,460,-70],[437,495,-80],[440,525,-90],[447,550,-90],[455,575,110],[450,590,-60],[440,600,120],[430,625,140],[415,635,-40],[470,640,-40],[508,555,140],[578,540,-30],[420,655,130],[405,665,-20],[390,655,130],[370,675,145],[400,680,-30],[345,705,150],[320,715,-30],[335,700,-60],[300,720,-150],[305,735,20],[290,745,120],[310,765,-40],[290,775,60],[350,745,-35],[335,770,-40],[295,795,-60],[325,800,-120],[275,810,-120],[290,812,-155],[345,815,-130],[360,835,-140],[385,850,30],[370,860,-130],[410,860,-50],[395,880,-160],[400,890,-130],[430,905,-120],[450,930,-120],[465,945,-30],[465,960,-110],[470,985,-120],[490,1000,-130],[475,1045,-100],[863,462,0],[980,442,-10],[1000,440,0],[60,645,20],
  ] },
  { x: 1340, y: 660, pts: [
    [10,90,120],[20,82,0],[80,35,100],[95,25,80],[115,20,160],[180,35,150],[160,45,160],[125,68,165],[25,442,-10],[48,440,0],[75,445,60],[90,465,-130],[100,490,-120],[118,505,60],[145,513,0],[422,32,-120],[452,92,-100],[468,115,-130],[512,180,-120],[545,235,-110],[550,250,-90],[558,285,-75],[530,315,-20],[472,350,-10],[375,380,0],[350,390,-10],[312,412,-10],[278,425,-5],[150,590,-110],[165,627,-120],[198,670,-120],[205,690,-115],[220,705,-120],[302,808,-130],[335,860,-130],[340,875,-120],[342,885,-100],[335,905,-80],[298,925,-25],[265,970,-110],
  ] },
];
const arrows = arrowGroups.flatMap((g) => g.pts.map((p) => [g.x + p[0] / 3, g.y + p[1] / 3, p[2]]));
const stops = [[1296, 703], [1303, 704], [1357, 655], [1354, 674], [1420, 900]];

type Label = [string, number, number, number, number];
const streets: Label[] = [
  ["1-го Листопада вулиця", 1090, 343, 41, 126],
  ["жного вулиця", 1226, 303, 40, 76],
  ["Шевченка вулиця", 1416, 436, -39, 98],
  ["Шевченка вулиця", 1066, 685, -34, 98],
  ["Драгоманова вулиця", 1222, 600, 60, 114],
  ["Народна вулиця", 1094, 708, 48, 88],
  ["Мазепи вулиця", 1605, 364, 64.5, 84],
  ["Поштова вулиця", 1491, 500, -26, 91],
  ["Валова вулиця", 1396, 514, 62, 80],
  ["Незалежності вулиця", 1557, 578, -27, 122],
  ["Людкевича вулиця", 1343, 743, -29, 102],
  ["22-го Січня", 1331, 750, 61, 62],
  ["Збіжнева вулиця", 1281, 885, 60, 95],
  ["Ринок майдан", 1524, 949, -25, 76],
  ["Торгова", 1635, 890, -22, 46],
  ["осси вулиця", 1108, 1023, -34, 72],
  ["Коперника", 1131, 948, 48, 60],
  ["ра вулиця", 1485, 690, 66, 52],
  ["Незалежності", 1213, 774, -34, 78],
];

const halo = "[paint-order:stroke] [stroke:#ffffffb0] [stroke-width:2px]";

function MapView() {
  return (
    <svg viewBox="1034 306 610 708" className="block h-[708px] w-[610px] bg-[#f1eee8] tracking-normal font-['Noto_Sans',sans-serif]">
      <defs>
        <linearGradient id="arw" x1="0" y1="0" x2="0" y2="1">
          <stop offset="0" stopColor="#74bdf8" />
          <stop offset="1" stopColor="#3488da" />
        </linearGradient>
        <radialGradient id="ball" cx=".4" cy=".25" r=".8">
          <stop offset="0" stopColor="#ffc6bc" />
          <stop offset=".45" stopColor="#ff5a40" />
          <stop offset="1" stopColor="#d81a04" />
        </radialGradient>
        <g id="arrow">
          <path d="M-8 -4H0.500V-9L10 0L0.500 9V4H-8Z" transform="translate(.6 1)" fill="none" stroke="#10204a" strokeWidth="2.200" opacity=".35" />
          <path d="M-8 -4.500H0V-9.300L10.300 0L0 9.300V4.500H-8Z" fill="url(#arw)" stroke="#0c4a96" strokeWidth="1.100" />
        </g>
      </defs>
      {buildings.map((b) => <polygon key={b} points={b} fill="#c3b0af" stroke="#b09c9b" strokeWidth=".6" />)}
      <polygon points="1102,598 1117,586 1137,610 1123,620" fill="#f6eeb7" stroke="#e6da92" />
      {roads.map(([w, d]) => <path key={d} d={d} stroke="#bdbdbd" strokeWidth={w + 1.4} fill="none" strokeLinecap="round" strokeLinejoin="round" />)}
      {roads.map(([w, d]) => <path key={d} d={d} stroke="#fff" strokeWidth={w - 0.6} fill="none" strokeLinecap="round" strokeLinejoin="round" />)}
      <path d="M1030 700L1073 668L1130 625L1190 582L1250 542L1293 512L1360 465L1390 442L1470 378L1555 303H1577L1400 454L1340 498L1220 584L1092 675L1030 720Z" fill="#f8d5a9" stroke="#d2a878" strokeWidth=".8" />
      <polygon points="1293,782 1331,763 1341,785 1325,793 1322,789 1300,798" fill="#aaa9a7" stroke="#8f8f8d" />
      <path d="M1318 775V788M1314 779H1322" stroke="#000" strokeWidth="2.200" />

      {streets.map(([t, x, y, a, len], i) => (
        <text key={i} transform={`translate(${x} ${y}) rotate(${a})`} textLength={len} lengthAdjust="spacingAndGlyphs" fontSize="12" fill="#000">{t}</text>
      ))}
      <g textAnchor="middle" className={halo}>
        <g fill="#555" fontSize="12">
          <text x="1148" y="559">Стрийська</text>
          <text x="1148" y="572">міська</text>
          <text x="1148" y="585">рада</text>
        </g>
        <g fill="#16165c" fontSize="9.200">
          <text x="1195" y="703">Загальноосвітня</text>
          <text x="1195" y="713">середня</text>
          <text x="1195" y="723">школа</text>
          <text x="1195" y="733">І-ІІІ ступенів</text>
          <text x="1195" y="743">№ 1</text>
        </g>
        <g fill="#16165c" fontSize="10.500">
          <text x="1318" y="802">Костел</text>
          <text x="1318" y="814">Успіння</text>
          <text x="1318" y="826">Пресвятої</text>
          <text x="1318" y="838">Діви Марії</text>
        </g>
        <text x="1250" y="687" fontSize="9" fill="#666">11, 13</text>
        <text x="1389" y="439" fontSize="10.500" fill="#b12fc0">Фуршет</text>
        <text x="1407" y="477" fontSize="10.500" fontWeight="700" fill="#734a08">York</text>
        <text x="1154" y="863" fontSize="15" fill="#888">Стрий</text>
      </g>
      <text x="1115" y="608" fontSize="15" fontWeight="500" fill="#0a8fd8">P</text>
      <path d="M1382 417H1385L1388 426H1395M1385 419H1395L1393 424H1387M1388 419V424M1391 419V424" stroke="#b12fc0" strokeWidth="1" fill="none" />
      <circle cx="1389" cy="428.500" r="1" fill="#b12fc0" /><circle cx="1394" cy="428.500" r="1" fill="#b12fc0" />
      <path d="M1388 455.500H1396V458C1396 462 1394 463.500 1391 463.500H1388Z" fill="#734a08" />
      <path d="M1396 456.500H1398Q1400.500 456.500 1399.500 459Q1398.500 461 1395 461.500" stroke="#734a08" strokeWidth="1.200" fill="none" />
      <path d="M1555 441C1549 442 1546 447 1548 452" stroke="#734a08" strokeWidth="2.200" fill="none" />
      <path d="M1553 440L1556 443M1546 450L1550 452" stroke="#734a08" strokeWidth="3.500" />
      <circle cx="1478" cy="488" r="7.300" fill="#efe3c6" stroke="#8d6a30" strokeWidth="1.200" />
      <path d="M1473.500 484.500H1482.500V491.500H1473.500ZL1478 488.500L1482.500 484.500M1473.500 491.500L1476.500 488M1482.500 491.500L1479.500 488" fill="none" stroke="#734a08" />
      {[[1083, 688, 45], [1367, 848, -22], [1461, 801, 160], [1571, 863, -110], [1486, 964, -22], [1441, 985, 160]].map(([x, y, a]) => (
        <path key={`${x}`} d="M-5 -1H1V-3L5 0L1 3V1H-5Z" fill="#6a6ad0" transform={`translate(${x} ${y}) rotate(${a})`} />
      ))}

      <g stroke="#0000ff" opacity=".66" strokeWidth="5" fill="none" strokeLinejoin="round">
        {tracks.map((d) => <path key={d} d={d} />)}
      </g>
      {arrows.map(([x, y, a], i) => (
        <use key={i} href="#arrow" transform={`translate(${x} ${y}) rotate(${a})`} />
      ))}
      {stops.map(([x, y]) => <circle key={`${x}-${y}`} cx={x} cy={y} r="9.700" fill="url(#ball)" stroke="#a81808" strokeWidth=".8" />)}
      <path d="M1371.500 465V482L1375.500 478.500L1378.500 484L1381 482.500L1378.500 477.500H1383Z" fill="#fff" stroke="#000" />
    </svg>
  );
}

const mapBtn = "rounded-[4px] bg-white shadow-[0_1px_4px_rgba(0,0,0,0.6)]";
const drawIcons = [
  <g key="l" stroke="#444"><path d="M9 18L18 9" strokeWidth="2" /><rect x="7" y="17" width="3" height="3" fill="#fff" /><rect x="17" y="7" width="3" height="3" fill="#fff" /></g>,
  <path key="p" d="M13 7L19.500 11.500L17.500 19H8.500L7 11.500Z" fill="#444" />,
  <rect key="r" x="8" y="8" width="10" height="10" fill="#444" />,
  <circle key="c" cx="13" cy="13" r="5.500" fill="#444" />,
  <path key="m" d="M13 7C9.500 7 8.500 9.500 9 12C9.500 14.500 12 16.500 13 19.500C14 16.500 16.500 14.500 17 12C17.500 9.500 16.500 7 13 7ZM13 9.300A2 2 0 1 1 13 13.300A2 2 0 1 1 13 9.300" fill="#444" fillRule="evenodd" />,
];
const editIcons = [
  <g key="e" fill="none" stroke="#444" strokeWidth="1.700"><path d="M14 9H10Q8 9 8 11V16Q8 18 10 18H15Q17 18 17 16V13" /><path d="M11.500 15L17.500 8.500" strokeWidth="2.200" /><path d="M18 6.500L19.500 8" strokeWidth="2.500" /></g>,
  <g key="t" fill="#999" stroke="#888"><path d="M8.500 10.500H17.500V19H8.500Z" /><path d="M7.500 9H18.500M11 8.500V6.500H15V8.500" fill="none" strokeWidth="1.500" /></g>,
];

function MapControls() {
  return (
    <>
      <div className="absolute left-[10px] top-[10px] flex flex-col gap-[10px]">
        <svg viewBox="0 0 26 26" className={`h-[26px] w-[26px] ${mapBtn}`}>
          <path d="M13.500 12.500V7.500L15 9L18 6L20 8L17 11L18.500 12.500ZM12.500 13.500V18.500L11 17L8 20L6 18L9 15L7.500 13.500Z" fill="#111" />
        </svg>
        <div className={`flex h-[54px] w-[26px] flex-col ${mapBtn}`}>
          <svg viewBox="0 0 26 27" className="h-[27px] border-b border-[#ccc]"><path d="M13 9V18M8.500 13.500H17.500" stroke="#000" strokeWidth="2.400" /></svg>
          <svg viewBox="0 0 26 27" className="h-[27px]"><path d="M10 14.500H16" stroke="#000" strokeWidth="2.600" /></svg>
        </div>
      </div>
      <div className={`absolute left-[10px] top-[478px] flex h-[134px] w-[26px] flex-col divide-y divide-[#ccc] ${mapBtn}`}>
        {drawIcons.map((n, i) => <svg key={i} viewBox="0 0 26 26" className="h-[27px] w-[26px]">{n}</svg>)}
      </div>
      <div className={`absolute left-[10px] top-[624px] flex h-[53px] w-[26px] flex-col divide-y divide-[#ccc] ${mapBtn}`}>
        {editIcons.map((n, i) => <svg key={i} viewBox="0 0 26 26" className="h-[27px] w-[26px]">{n}</svg>)}
      </div>
      <svg viewBox="0 0 36 36" className={`absolute right-[9px] top-[10px] h-[36px] w-[36px] ${mapBtn}`}>
        <path d="M5 23L18 31L31 23L18 15Z" fill="#888" />
        <path d="M5 20L18 28L31 20L18 12Z" fill="#b3b3b3" stroke="#fff" strokeWidth=".8" />
        <path d="M5 15L18 23.500L31 15L18 6Z" fill="#dcdcdc" stroke="#fff" strokeWidth=".8" />
        <path d="M5 15.500L18 24L31 15.500" fill="none" stroke="#777" />
      </svg>
      <div className="absolute bottom-[4px] left-[5px] flex h-[17px] w-[68px] items-center border-2 border-t-0 border-[#777] bg-white/50 pl-[5px] text-[11px] tracking-[-0.100px] text-[#222] font-['DejaVu_Sans']">50 m</div>
      <div className="absolute bottom-0 right-0 flex h-[15px] w-[230px] items-center justify-end whitespace-nowrap bg-white/70 pr-[4px] text-[11px] tracking-[0.020px] text-[#333] font-['DejaVu_Sans']">
        <span className="text-[#0078a8]">Leaflet</span>&nbsp;| ©&nbsp;<span className="text-[#0078a8]">OpenStreetMap</span>&nbsp;Contributors
      </div>
    </>
  );
}

function MapPane() {
  return (
    <div className="ml-px flex w-[628px] flex-col bg-[#e9e9e9] pt-px">
      <div className="flex">
        <div className="relative h-[708px] w-[610px] shrink-0 overflow-hidden">
          <MapView />
          <MapControls />
        </div>
        <div className="flex flex-1 flex-col items-center">
          <svg viewBox="0 0 14 15" className="h-[15px] w-[14px]"><path d="M3.500 8.500L7.500 4.500L11.500 8.500" fill="none" stroke="#777" strokeWidth="1.300" /></svg>
          <div className="w-[12px] flex-1 rounded-[2px] border border-[#b5b5b5] bg-[linear-gradient(90deg,#fbfbfb,#e4e4e4)]" />
          <svg viewBox="0 0 14 17" className="h-[17px] w-[14px]"><path d="M3.500 8.500L7.500 12.500L11.500 8.500" fill="none" stroke="#777" strokeWidth="1.300" /></svg>
        </div>
      </div>
      <div className="flex h-[17px] items-center">
        <svg viewBox="0 0 14 14" className="h-[14px] w-[14px]"><path d="M8.500 3L4.500 7L8.500 11" fill="none" stroke="#777" strokeWidth="1.300" /></svg>
        <div className="h-[13px] w-[580px] rounded-[2px] border border-[#b5b5b5] bg-[linear-gradient(#f4f4f4,#ebebeb)]" />
        <svg viewBox="0 0 16 14" className="h-[14px] w-[16px]"><path d="M7.500 3L11.500 7L7.500 11" fill="none" stroke="#777" strokeWidth="1.300" /></svg>
        <div className="h-full flex-1 bg-white" />
      </div>
    </div>
  );
}

/* ---------- main area ---------- */

const pagerIcons = [
  "M5 4V9M10 4L7 6.500L10 9Z",
  "M7 4L4 6.500L7 9ZM10 4L7 6.500L10 9Z",
  "M4 4L7 6.500L4 9ZM7 4L10 6.500L7 9Z",
  "M4 4L7 6.500L4 9ZM9 4V9",
];

function Main() {
  return (
    <main className="ml-px flex h-[1012px] w-[1289px] shrink-0 flex-col border border-[#8d9095] px-[2px]">
      <div className="flex h-[22px] items-end pl-[6px]">
        <div className="relative h-[19px] w-[195px]">
          <svg viewBox="0 0 195 19" className="absolute inset-0 h-full w-full">
            <path d="M0 19Q9 12 13 5Q15 1 19 1H53V19Z" fill="#f1f3f8" stroke="#c2cbdc" />
            <path d="M37 19Q46 12 50 5Q52 1 56 1H194V19Z" fill="#fafbfd" stroke="#c2cbdc" />
            <path d="M179 6L185 13M185 6L179 13" stroke="#888" strokeWidth="1.500" />
          </svg>
          <div className="relative flex h-full items-center leading-[18px]">
            <span className="mb-px ml-[22px] w-[38px]">Info</span>
            <span className="mb-px tracking-[0.300px]">GPS-треки (Web)</span>
          </div>
        </div>
      </div>
      <div className="flex h-[986px] flex-col border border-[#eff2f8] pl-[5px] pr-[4px] pt-[5px]">
        <div className={`${etched} h-[33px] w-[1273px] pl-[5px] pt-px`}>
          <Icons
            gap="gap-[8px]"
            items={[
              <>{chart}<Badge y={16} /></>,
              <>{grid}<Badge y={16} /></>,
              <>{shield}<Badge y={15} /></>,
              <>{chart}<Badge minus y={16} /></>,
            ]}
          />
        </div>
        <section className="mt-[7px] h-[100px] w-[1273px] border border-[#8f94a3]">
          <div className="flex h-[22px] items-center justify-between border-b border-[#747985] bg-[linear-gradient(#fafafb,#dfe1e6_40%,#d5d8df_70%,#edf0f6)] pl-[3px] pr-[14px]">
            <span className="pt-[2px]">Selection criteria</span>
            <svg viewBox="0 0 14 14" className="h-[14px] w-[14px]">
              <circle cx="7" cy="7" r="6" fill="#fcfcfc" stroke="#a5a5a5" />
              <path d="M7 3L10 6.500H4ZM7 7L10 10.500H4Z" fill="#555" />
            </svg>
          </div>
          <div className="grid grid-cols-[118px_501px_22px_118px_237px_27px_236px] grid-rows-[23px_23px] items-center gap-y-[10px] pl-[5px] pt-[7px]">
            <b className="text-[#6b6b6b]">Машина:</b>
            <div className={field}>22763TA</div>
            <span />
            <b className="text-[#6b6b6b]">GPS час:</b>
            <div className={field}>2013-12-02 00:00:00</div>
            <span className="text-center">to</span>
            <div className={field}>2014-01-02 09:30:00</div>
            <b className="text-[#6b6b6b]">Орг. підрозділ:</b>
            <div className={field}>Гараж 1</div>
          </div>
        </section>
        <div className="mt-[8px] flex items-center pl-[2px]">
          <Button w="w-[69px]"><span><u>D</u>efault</span></Button>
          <div className="w-[10px]" />
          <Button w="w-[67px]">Design</Button>
          <div className="w-[10px]" />
          <Button w="w-[116px]" chevron><span className="ml-[9px] tracking-[0.300px]">Configure</span></Button>
          <div className="ml-[297px] flex gap-[10px]">
            {pagerIcons.map((d) => (
              <div key={d} className="flex h-[24px] w-[40px] items-center justify-center rounded-[5px] border border-[#bfc2c9] bg-[linear-gradient(#e0e2e7,#d8dbe1)]">
                <svg viewBox="0 0 16 16" className="h-4 w-4">
                  <rect width="16" height="16" rx="1.500" fill="#999" />
                  <path d={d} transform="translate(1 1.500)" fill="#b0b0b0" stroke="#b0b0b0" />
                </svg>
              </div>
            ))}
          </div>
          <span className="ml-[22px] tracking-[0.350px]">Page 1 of 1</span>
          <div className="ml-auto mr-px flex gap-[10px]">
            <Button w="w-[66px]"><span><u>E</u>xport</span></Button>
            <Button w="w-[66px]"><span><u>R</u>un</span></Button>
          </div>
        </div>
        <div className="mt-[8px] flex h-[795px] w-[1273px] flex-col border border-[#8f94a3]">
          <div className="flex h-[22px] items-end pl-[7px]">
            <div className="relative h-[19px] w-[106px]">
              <svg viewBox="0 0 106 19" className="absolute inset-0 h-full w-full">
                <path d="M0 19Q9 12 13 5Q15 1 19 1H105.500V19Z" fill="#fafbfd" stroke="#c2cbdc" />
              </svg>
              <span className="relative ml-[23px] block whitespace-nowrap leading-[18px] tracking-[0.280px]">Main details</span>
            </div>
            <div className="h-[19px] w-[209px] whitespace-nowrap rounded-t-[3px] border-r border-t border-[#c2cbdc] bg-[#eff1f6] pl-[7px] leading-[17px] tracking-[0.280px]">Згруповані пробіги (таблиця)</div>
            <div className="h-[19px] w-[198px] whitespace-nowrap rounded-t-[3px] border-r border-t border-[#c2cbdc] bg-[#eff1f6] pl-[8px] leading-[17px] tracking-[0.280px]">Згруповані пробіги (графік)</div>
          </div>
          <div className="flex flex-1 flex-col border border-[#e8ecf5] px-px">
            <div className={`${etched} h-[33px] w-[1267px] pl-[5px]`}>
              <Icons gap="gap-[8px]" items={[<>{form}<Badge y={16} /></>, <>{form}{pencil}</>, <>{form}<Badge minus y={16} /></>]} />
            </div>
            <div className="mt-[8px] flex">
              <DataTable />
              <div className="ml-[2px] flex h-[727px] w-[8px] shrink-0 border-x border-[#9a9ea8]">
                <SplitHandle w="w-[6px]" pad="pt-[34px]" grip="mt-[300px]" />
              </div>
              <MapPane />
            </div>
          </div>
        </div>
      </div>
    </main>
  );
}

export default function App() {
  return (
    <div className="flex h-[1050px] w-[1680px] flex-col overflow-hidden bg-[#d6d9e0] text-[12px] tracking-[0.220px] text-black font-['DejaVu_Sans',sans-serif]">
      <TopBar />
      <div className="flex h-[1026px]">
        <Launcher />
        <div className="flex pt-[7px]">
          <Nav />
          <SplitHandle w="w-[8px]" pad="pt-[33px]" grip="mt-[446px]" />
          <Main />
        </div>
      </div>
    </div>
  );
}
